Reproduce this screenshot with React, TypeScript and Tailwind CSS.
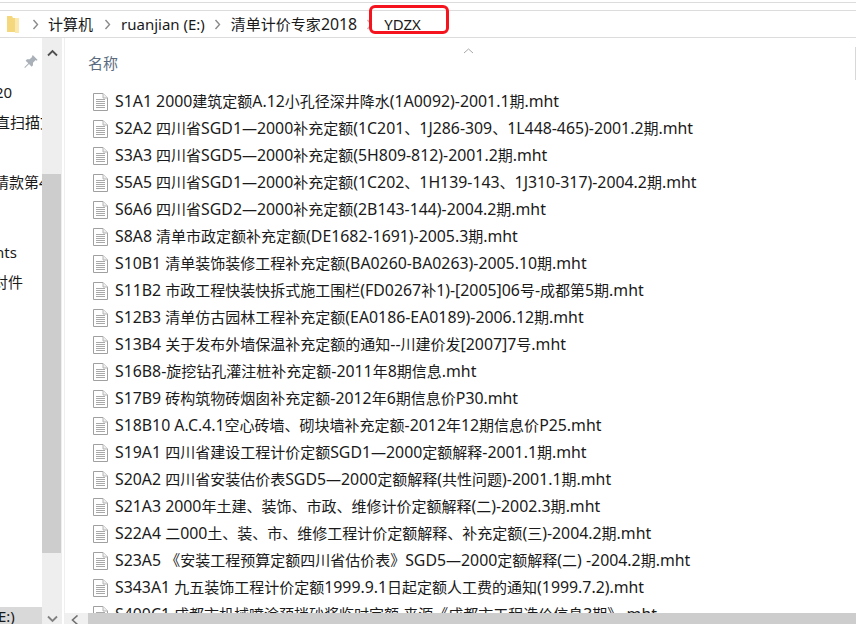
const files = [
  'S1A1 2000建筑定额A.12小孔径深井降水(1A0092)-2001.1期.mht',
  'S2A2 四川省SGD1—2000补充定额(1C201、1J286-309、1L448-465)-2001.2期.mht',
  'S3A3 四川省SGD5—2000补充定额(5H809-812)-2001.2期.mht',
  'S5A5 四川省SGD1—2000补充定额(1C202、1H139-143、1J310-317)-2004.2期.mht',
  'S6A6 四川省SGD2—2000补充定额(2B143-144)-2004.2期.mht',
  'S8A8 清单市政定额补充定额(DE1682-1691)-2005.3期.mht',
  'S10B1 清单装饰装修工程补充定额(BA0260-BA0263)-2005.10期.mht',
  'S11B2 市政工程快装快拆式施工围栏(FD0267补1)-[2005]06号-成都第5期.mht',
  'S12B3 清单仿古园林工程补充定额(EA0186-EA0189)-2006.12期.mht',
  'S13B4 关于发布外墙保温补充定额的通知--川建价发[2007]7号.mht',
  'S16B8-旋挖钻孔灌注桩补充定额-2011年8期信息.mht',
  'S17B9 砖构筑物砖烟囱补充定额-2012年6期信息价P30.mht',
  'S18B10 A.C.4.1空心砖墙、砌块墙补充定额-2012年12期信息价P25.mht',
  'S19A1 四川省建设工程计价定额SGD1—2000定额解释-2001.1期.mht',
  'S20A2 四川省安装估价表SGD5—2000定额解释(共性问题)-2001.1期.mht',
  'S21A3 2000年土建、装饰、市政、维修计价定额解释(二)-2002.3期.mht',
  'S22A4 二000土、装、市、维修工程计价定额解释、补充定额(三)-2004.2期.mht',
  'S23A5 《安装工程预算定额四川省估价表》SGD5—2000定额解释(二) -2004.2期.mht',
  'S343A1 九五装饰工程计价定额1999.9.1日起定额人工费的通知(1999.7.2).mht',
  'S400C1 成都市机械喷涂预拌砂浆临时定额 来源《成都市工程造价信息3期》.mht',
];

// latin runs sit a bit wider than the CJK in the original font
function Mixed({ text }: { text: string }) {
  const parts = text.split(/([\x00-\x7f]+)/).filter(Boolean);
  return (
    <>
      {parts.map((p, i) =>
        /^[\x00-\x7f]/.test(p) ? (
          <span key={i} className="text-[15.85px]">
            {p}
          </span>
        ) : (
          <span key={i}>{p}</span>
        ),
      )}
    </>
  );
}

function FileIcon() {
  return (
    <svg width="15" height="18" viewBox="0 0 15 18" className="shrink-0">
      <path d="M0.5 0.5H10L14.5 5V17.5H0.5Z" fill="#fff" stroke="#a0a0a0" />
      <path d="M10 0.5V5H14.5" fill="#f0f0f0" stroke="#b4b4b4" />
      <path d="M3 6.5H12M3 8.5H12M3 10.5H12M3 12.5H12M3 14.5H12" stroke="#a8a8a8" />
    </svg>
  );
}

function FolderIcon() {
  return (
    <svg width="12" height="17" viewBox="0 0 12 17" className="shrink-0">
      <path d="M0 0H5L6 2H9V16H0Z" fill="#f5d77e" />
      <path d="M8 2H12V17H8Z" fill="#fbe9ad" />
    </svg>
  );
}

function Crumb({ dim }: { dim?: boolean }) {
  return (
    <svg width="7" height="11" viewBox="0 0 7 11" className="shrink-0">
      <path d="M1.5 1L5.5 5.5L1.5 10" fill="none" stroke={dim ? '#b8b8b8' : '#8a8a8a'} strokeWidth="1.4" />
    </svg>
  );
}

export default function App() {
  return (
    <div className="relative flex h-[624px] w-[856px] flex-col overflow-hidden bg-white font-['Noto_Sans','Noto_Sans_CJK_SC',sans-serif] text-[15px] text-[#1a1a1a]">
      <div className="mt-[2px] h-[8px] shrink-0 border-t border-[#dcdcdc]" />

      <div className="flex h-[28px] shrink-0 items-center border-y border-[#dcdcdc] pl-[7px]">
        <FolderIcon />
        <div className="ml-[13px] flex items-center">
          <Crumb />
          <span className="ml-[9px] whitespace-nowrap leading-[24px]">计算机</span>
          <span className="ml-[11px] flex">
            <Crumb />
          </span>
          <span className="ml-[10px] whitespace-nowrap leading-[24px]">ruanjian (E:)</span>
          <span className="ml-[9px] flex">
            <Crumb />
          </span>
          <span className="ml-[10px] whitespace-nowrap leading-[24px]">
            <Mixed text="清单计价专家2018" />
          </span>
          <span className="ml-[9px] flex">
            <Crumb dim />
          </span>
          <span className="ml-[11px] whitespace-nowrap leading-[24px]">YDZX</span>
        </div>
      </div>

      <div className="flex min-h-0 flex-1">
        <div className="relative w-[42px] shrink-0 overflow-hidden">
          <svg width="16" height="16" viewBox="0 0 24 24" className="absolute left-[23px] top-[16px]">
            <path d="M15 2l7 7-2 1-1-1-4 4 0 4-2 2-4-4-6 6-1-1 6-6-4-4 2-2 4 0 4-4-1-1z" fill="#a9b0b8" />
          </svg>
          <div className="mt-[39px] flex flex-col whitespace-nowrap leading-[30px]">
            <div className="-ml-[5px] h-[30px]">20</div>
            <div className="-ml-[5px] h-[30px]">直扫描文件</div>
            <div className="h-[30px]" />
            <div className="-ml-[6px] h-[30px]">请款第4期</div>
            <div className="h-[40px]" />
            <div className="-ml-[5px] h-[30px]">nts</div>
            <div className="-ml-[7px] h-[30px]">对件</div>
          </div>
          <div className="absolute inset-x-0 bottom-0 h-[17px] bg-[#d9d9d9] leading-[18px]">
            <span className="-ml-[2px]">E:)</span>
          </div>
        </div>

        <div className="flex w-[20px] shrink-0 flex-col bg-[#eeeeee]">
          <div className="mt-[9px] flex h-[127px] shrink-0 justify-center pt-[2px]">
            <svg width="11" height="8" viewBox="0 0 11 8">
              <path d="M1 6.5L5.5 2L10 6.5" fill="none" stroke="#505050" strokeWidth="1.8" />
            </svg>
          </div>
          <div className="h-[379px] w-[19px] shrink-0 bg-[#cdcdcd]" />
          <div className="flex flex-1 items-end justify-center pb-[1px]">
            <svg width="11" height="8" viewBox="0 0 11 8">
              <path d="M1 1.5L5.5 6L10 1.5" fill="none" stroke="#808080" strokeWidth="1.8" />
            </svg>
          </div>
        </div>

        <div className="ml-[2px] w-[1px] shrink-0 bg-[#efefef]" />

        <div className="relative flex min-w-0 flex-1 flex-col overflow-hidden">
          <svg width="11" height="6" viewBox="0 0 11 6" className="absolute left-[398px] top-[10px]">
            <path d="M1 5L5.5 1L10 5" fill="none" stroke="#a8a8a8" />
          </svg>
          <div className="ml-[23px] mt-[12px] h-[26px] shrink-0 leading-[26px] text-[#5a6b80]">名称</div>
          <div className="ml-[28px] mt-[12px] flex min-h-0 flex-1 flex-col">
            {files.map(name => (
              <div key={name} className="flex h-[27px] shrink-0 items-center">
                <FileIcon />
                <span className="ml-[7px] whitespace-nowrap leading-[27px]">
                  <Mixed text={name} />
                </span>
              </div>
            ))}
          </div>
          <div className="absolute inset-x-0 bottom-0 flex h-[11px] bg-[#f0f0f0]">
            <div className="flex w-[23px] shrink-0 items-start pl-[6px] pt-[2px]">
              <svg width="8" height="9" viewBox="0 0 8 9">
                <path d="M6.5 0.5L1.5 5L6.5 9.5" fill="none" stroke="#707070" strokeWidth="1.6" />
              </svg>
            </div>
            <div className="flex-1 bg-[#cdcdcd]" />
          </div>
        </div>

        <div className="absolute right-0 top-[47px] h-[33px] w-[1px] bg-[#d8d8d8]" />
      </div>

      <div className="absolute left-[369px] top-[5px] h-[29px] w-[80px] rounded-[6px] border-[3px] border-[#f5141e]" />
    </div>
  );
}
